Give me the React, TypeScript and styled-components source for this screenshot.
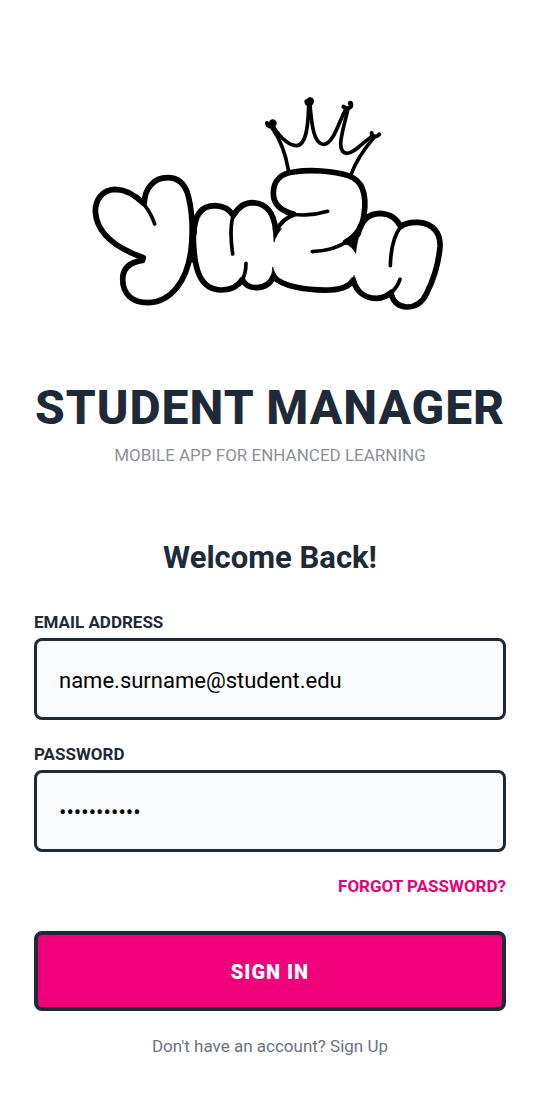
import React from "react";
import styled, { createGlobalStyle } from "styled-components";

const GlobalStyle = createGlobalStyle`
  *, *::before, *::after { box-sizing: border-box; }
  body {
    margin: 0;
    background: #ffffff;
    font-family: Roboto, "Liberation Sans", sans-serif;
    color: #1f2937;
  }
`;

const Screen = styled.main`
  display: flex;
  flex-direction: column;
  padding: 80px 34px 36px;
`;

const Brand = styled.header`
  display: flex;
  flex-direction: column;
  align-items: center;
  text-align: center;
`;

const Logo = styled.svg`
  display: block;
  width: 380px;
  max-width: 100%;
  height: auto;
  margin-bottom: 60px;
  fill: none;
  stroke: #000000;
  stroke-linecap: round;
  stroke-linejoin: round;
`;

const Title = styled.h1`
  margin: 0;
  font-size: 48px;
  line-height: 56px;
  font-weight: 800;
  letter-spacing: 1px;
  white-space: nowrap;
`;

const Tagline = styled.p`
  margin: 9px 0 0;
  font-size: 17px;
  line-height: 20px;
  color: #8e9097;
`;

const Form = styled.form`
  display: flex;
  flex-direction: column;
  margin-top: 75px;
`;

const Welcome = styled.h2`
  margin: 0 0 36px;
  font-size: 31px;
  line-height: 36px;
  font-weight: 700;
  text-align: center;
`;

const Field = styled.div`
  display: flex;
  flex-direction: column;
  gap: 6px;
  margin-bottom: 24px;
`;

const Label = styled.label`
  font-size: 17px;
  line-height: 20px;
  font-weight: 700;
`;

const Input = styled.input`
  width: 100%;
  height: 82px;
  padding: 2px 22px 0;
  border: 3px solid #1f2937;
  border-radius: 8px;
  background: #f9fafb;
  font-family: inherit;
  font-size: 22px;
  color: #000000;
  outline: none;
`;

const ForgotLink = styled.a`
  align-self: flex-end;
  font-size: 17px;
  line-height: 20px;
  font-weight: 700;
  color: #e6007a;
  text-decoration: none;
`;

const SubmitButton = styled.button`
  height: 80px;
  margin: 35px 0 25px;
  padding: 2px 0 0;
  border: 4px solid #1f2937;
  border-radius: 8px;
  background: #f0007a;
  font-family: inherit;
  font-size: 20px;
  font-weight: 900;
  letter-spacing: 1px;
  color: #ffffff;
`;

const SignUpLink = styled.a`
  align-self: center;
  font-size: 17px;
  line-height: 20px;
  color: #6b7280;
  text-decoration: none;
`;

function YuzuLogo() {
  return (
    <Logo viewBox="0 0 1140 720" role="img" aria-label="Yuzu">
      <g strokeWidth="17">
        <path d="M190 370C160 340 135 328 105 328C65 330 46 360 46 395C50 460 110 505 190 533L188 541C150 546 128 565 128 598C128 645 160 668 202 668C275 668 322 600 333 510C340 450 337 400 326 352C316 308 290 293 262 293C222 293 194 325 193 368" />
        <path d="M342 460C343 400 368 377 405 377C435 378 450 390 460 407C475 380 495 368 518 368C560 370 582 400 587 450" />
        <path d="M340 460C340 570 360 630 425 630C455 630 475 617 487 599" />
        <path d="M487 599C496 617 512 623 530 623C555 622 572 610 580 590C610 620 680 632 750 630C790 628 810 617 820 600C830 640 860 655 890 655C910 654 922 648 934 637" />
        <path d="M640 402C600 392 580 370 580 340C580 300 605 280 640 276C690 268 760 272 805 287C850 302 860 350 852 405C847 440 827 470 797 486" />
        <path d="M834 462C842 428 862 401 900 400C935 402 950 417 962 440C980 425 1000 427 1015 427C1060 430 1082 460 1080 500C1075 560 1060 600 1040 640C1025 672 1000 681 980 681C955 680 940 665 933 642" />
      </g>
      <path d="M589 450C602 428 620 412 640 405" strokeWidth="13" />
      <g strokeWidth="11">
        <path d="M190 370C204 388 216 407 224 432" />
        <path d="M460 405C449 440 452 480 458 522" />
        <path d="M485 602C495 587 498 570 498 550" />
        <path d="M620 399C650 408 700 407 743 394" />
        <path d="M805 482C775 503 735 513 697 515" />
        <path d="M962 440C940 470 932 510 931 557" />
        <path d="M934 637C948 625 955 613 960 598" />
      </g>
      <g fill="#000000" strokeWidth="2">
        <path d="M579 445C581 460 581 472 582 486C587 470 594 460 604 446Z" />
        <path d="M578 562C578 575 574 588 570 600L598 600C589 588 583 577 578 562Z" />
        <path d="M852 412C842 440 820 465 788 488C805 493 818 502 827 520C829 495 836 465 848 435Z" />
        <path d="M822 587C819 598 814 606 805 613L830 618Z" />
        <path d="M334 410C334 460 334 500 330 545L341 548C341 500 341 450 349 410Z" />
      </g>
      <g strokeWidth="11">
        <path d="M625 270C618 228 602 180 576 143" />
        <path d="M580 141C600 170 625 197 650 197C680 195 685 130 686 76" />
        <path d="M690 76C695 130 700 193 732 193C760 190 775 130 796 90" />
        <path d="M803 90C790 150 765 215 800 220C820 222 850 185 878 168" />
        <path d="M882 172C850 210 825 250 814 282" />
      </g>
      <g strokeWidth="12">
        <path d="M561 129C564 143 581 142 584 131C585 121 573 122 573 129" />
        <path d="M679 64C678 76 696 76 696 64C695 55 683 56 686 64" />
        <path d="M790 80C799 87 813 86 814 75C815 68 809 66 809 70" />
        <path d="M875 159C874 169 887 174 898 163" />
      </g>
    </Logo>
  );
}

export default function App() {
  return (
    <>
      <GlobalStyle />
      <Screen>
        <Brand>
          <YuzuLogo />
          <Title>STUDENT MANAGER</Title>
          <Tagline>MOBILE APP FOR ENHANCED LEARNING</Tagline>
        </Brand>
        <Form onSubmit={(event: React.FormEvent) => event.preventDefault()}>
          <Welcome>Welcome Back!</Welcome>
          <Field>
            <Label htmlFor="email">EMAIL ADDRESS</Label>
            <Input id="email" type="email" defaultValue="name.surname@student.edu" />
          </Field>
          <Field>
            <Label htmlFor="password">PASSWORD</Label>
            <Input id="password" type="password" defaultValue="studentpass" />
          </Field>
          <ForgotLink href="#forgot">FORGOT PASSWORD?</ForgotLink>
          <SubmitButton type="submit">SIGN IN</SubmitButton>
          <SignUpLink href="#signup">Don't have an account? Sign Up</SignUpLink>
        </Form>
      </Screen>
    </>
  );
}
